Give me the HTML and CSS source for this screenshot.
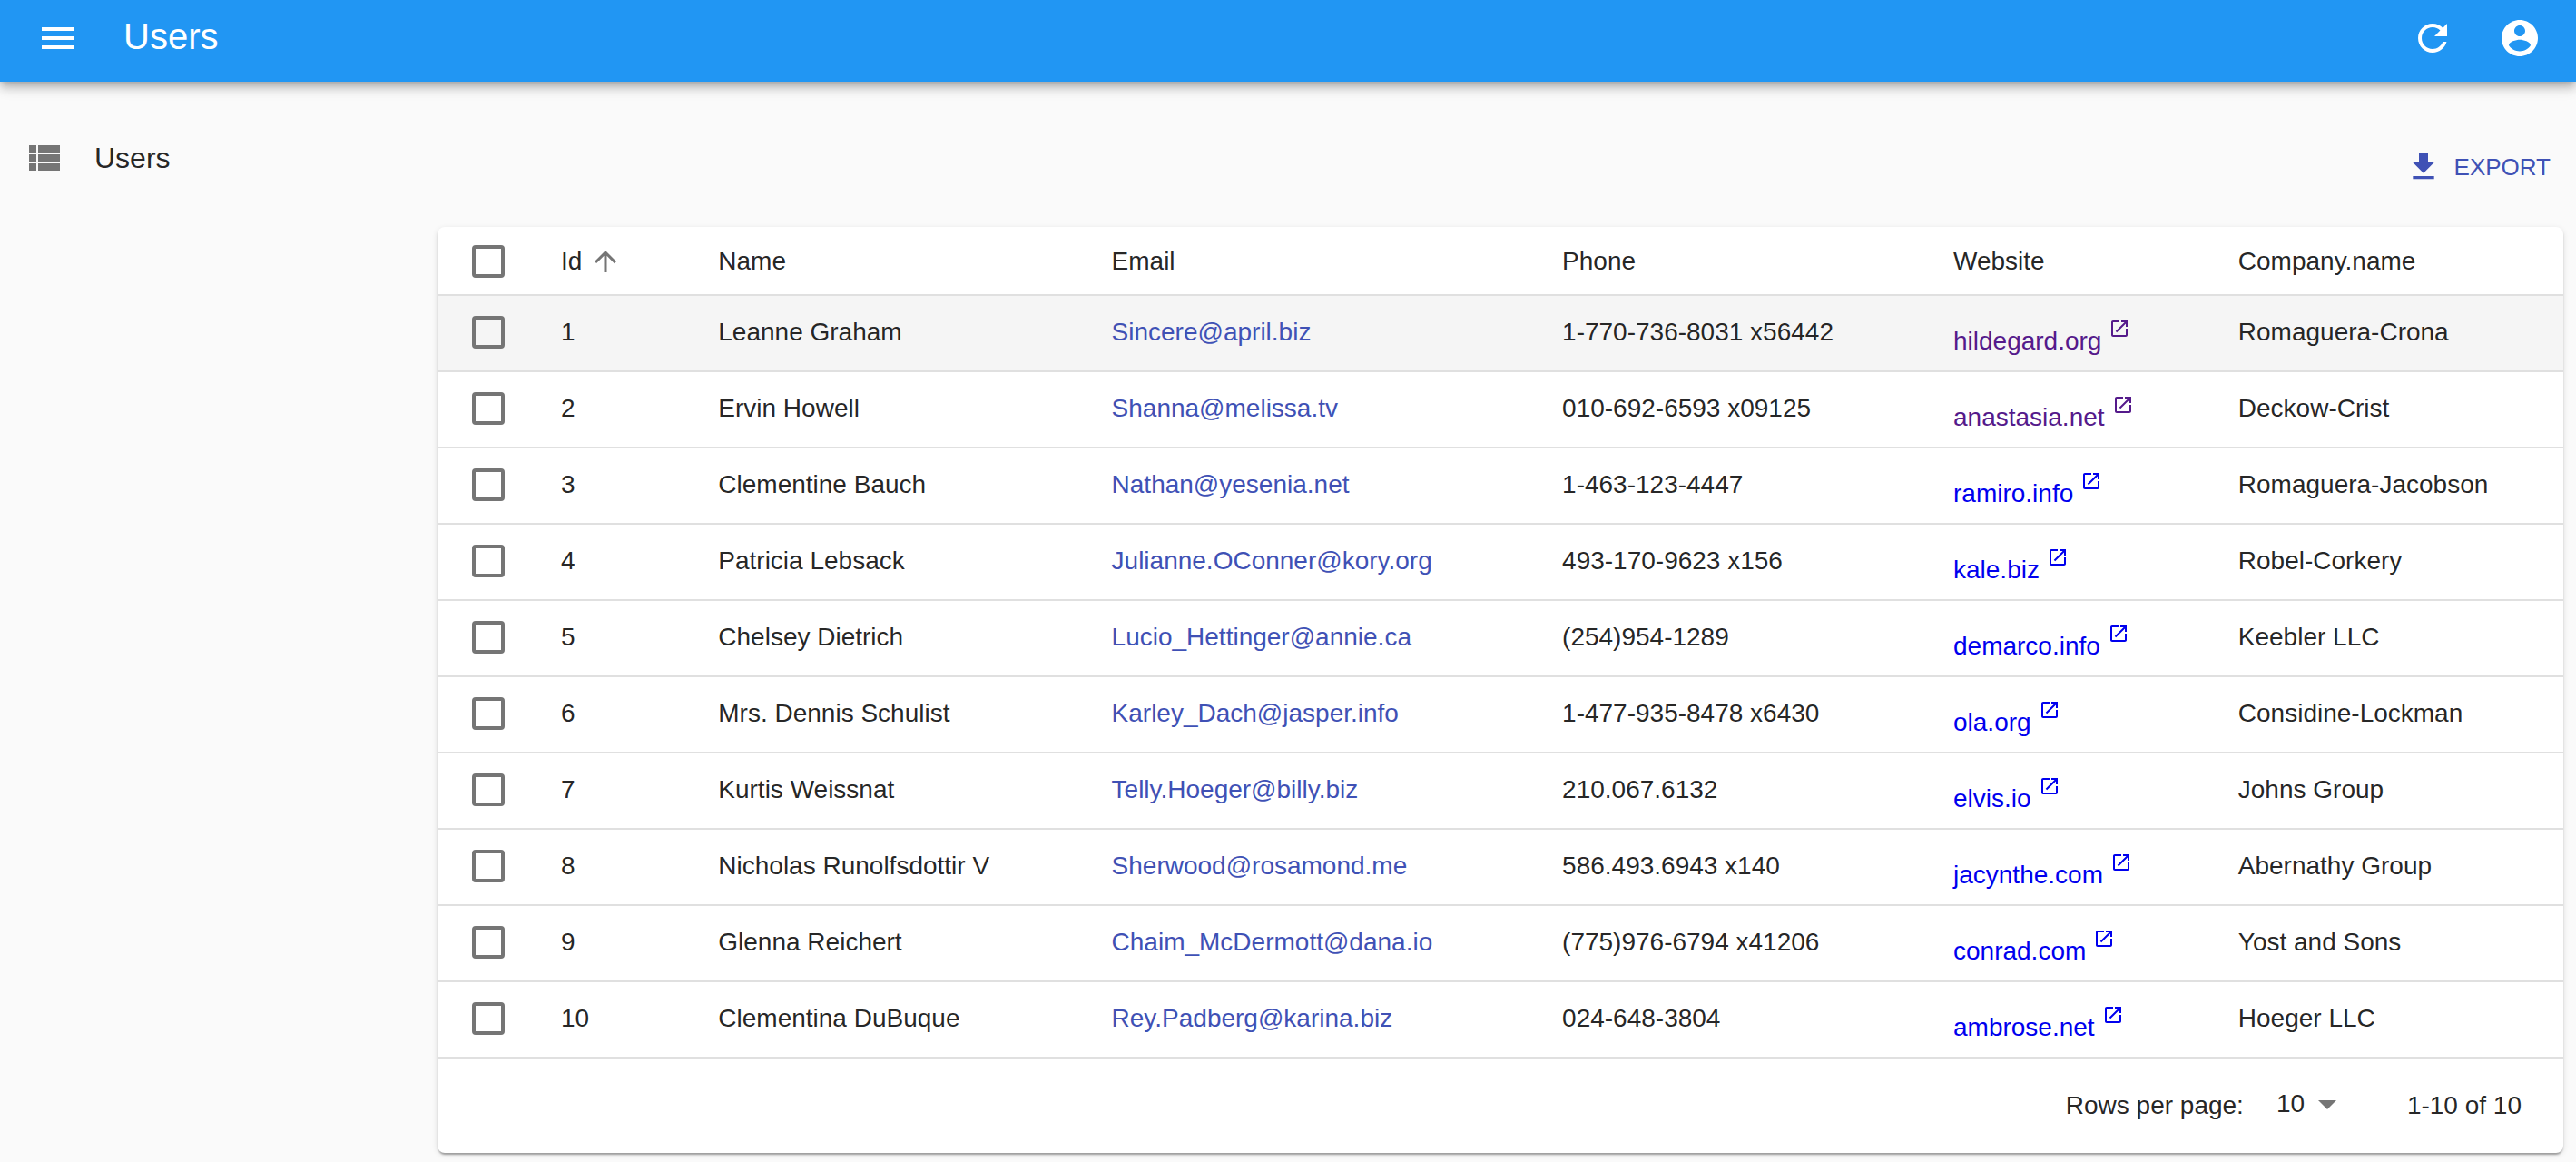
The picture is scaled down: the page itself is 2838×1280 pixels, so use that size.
FILE: index.html
```html
<!DOCTYPE html>
<html lang="en">
<head>
<meta charset="utf-8">
<title>Users</title>
<link rel="stylesheet" href="styles.css">
</head>
<body>
<svg class="sprite" aria-hidden="true">
  <symbol id="open" viewBox="0 0 24 24"><path d="M19 19H5V5h7V3H5c-1.110 0-2 .9-2 2v14c0 1.100.89 2 2 2h14c1.100 0 2-.9 2-2v-7h-2v7zM14 3v2h3.590l-9.830 9.830 1.410 1.410L19 6.410V10h2V3h-7z"/></symbol>
</svg>
<header class="app-bar">
  <button class="icon-button" type="button" aria-label="Open menu"><svg class="icon" viewBox="0 0 24 24"><path d="M3 18h18v-2H3v2zm0-5h18v-2H3v2zm0-7v2h18V6H3z"/></svg></button>
  <h1 class="app-title">Users</h1>
  <button class="icon-button" type="button" aria-label="Refresh"><svg class="icon" viewBox="0 0 24 24"><path d="M17.65 6.35C16.2 4.900 14.210 4 12 4c-4.420 0-7.990 3.580-7.990 8s3.570 8 7.990 8c3.730 0 6.840-2.550 7.730-6h-2.080c-.82 2.330-3.040 4-5.650 4-3.310 0-6-2.690-6-6s2.690-6 6-6c1.660 0 3.140.69 4.220 1.780L13 11h7V4l-2.350 2.350z"/></svg></button>
  <button class="icon-button" type="button" aria-label="Profile"><svg class="icon" viewBox="0 0 24 24"><path d="M12 2C6.480 2 2 6.480 2 12s4.480 10 10 10 10-4.480 10-10S17.520 2 12 2zm0 3c1.660 0 3 1.340 3 3s-1.340 3-3 3-3-1.340-3-3 1.340-3 3-3zm0 14.200c-2.500 0-4.710-1.280-6-3.220.03-1.990 4-3.080 6-3.080 1.990 0 5.970 1.090 6 3.080-1.290 1.940-3.500 3.220-6 3.220z"/></svg></button>
</header>
<div class="layout">
  <nav class="sidebar">
    <a class="menu-item" href="#users"><svg class="icon" viewBox="0 0 24 24"><path d="M4 14h4v-4H4v4zm0 5h4v-4H4v4zM4 9h4V5H4v4zm5 5h12v-4H9v4zm0 5h12v-4H9v4zM9 5v4h12V5H9z"/></svg>Users</a>
  </nav>
  <main class="content">
    <div class="actions">
      <button class="export" type="button"><svg class="export-icon" viewBox="0 0 24 24"><path d="M19 9h-4V3H9v6H5l7 7 7-7zM5 18v2h14v-2H5z"/></svg>EXPORT</button>
    </div>
    <section class="card">
      <table class="users">
        <colgroup><col class="col-check"><col class="col-id"><col class="col-name"><col class="col-email"><col class="col-phone"><col class="col-website"><col></colgroup>
        <thead>
          <tr><th><input class="check" type="checkbox" aria-label="Select all"></th><th><span class="sort">Id <svg class="sort-icon" viewBox="0 0 24 24"><path d="M4 12l1.410 1.410L11 7.830V20h2V7.830l5.580 5.590L20 12l-8-8-8 8z"/></svg></span></th><th>Name</th><th>Email</th><th>Phone</th><th>Website</th><th>Company.name</th></tr>
        </thead>
        <tbody>
          <tr class="active"><td><input class="check" type="checkbox" aria-label="Select user 1"></td><td>1</td><td>Leanne Graham</td><td><a class="email" href="mailto:Sincere@april.biz">Sincere@april.biz</a></td><td>1-770-736-8031 x56442</td><td><a class="site visited" href="http://hildegard.org">hildegard.org<svg class="open-icon"><use href="#open"/></svg></a></td><td>Romaguera-Crona</td></tr>
          <tr><td><input class="check" type="checkbox" aria-label="Select user 2"></td><td>2</td><td>Ervin Howell</td><td><a class="email" href="mailto:Shanna@melissa.tv">Shanna@melissa.tv</a></td><td>010-692-6593 x09125</td><td><a class="site visited" href="http://anastasia.net">anastasia.net<svg class="open-icon"><use href="#open"/></svg></a></td><td>Deckow-Crist</td></tr>
          <tr><td><input class="check" type="checkbox" aria-label="Select user 3"></td><td>3</td><td>Clementine Bauch</td><td><a class="email" href="mailto:Nathan@yesenia.net">Nathan@yesenia.net</a></td><td>1-463-123-4447</td><td><a class="site" href="http://ramiro.info">ramiro.info<svg class="open-icon"><use href="#open"/></svg></a></td><td>Romaguera-Jacobson</td></tr>
          <tr><td><input class="check" type="checkbox" aria-label="Select user 4"></td><td>4</td><td>Patricia Lebsack</td><td><a class="email" href="mailto:Julianne.OConner@kory.org">Julianne.OConner@kory.org</a></td><td>493-170-9623 x156</td><td><a class="site" href="http://kale.biz">kale.biz<svg class="open-icon"><use href="#open"/></svg></a></td><td>Robel-Corkery</td></tr>
          <tr><td><input class="check" type="checkbox" aria-label="Select user 5"></td><td>5</td><td>Chelsey Dietrich</td><td><a class="email" href="mailto:Lucio_Hettinger@annie.ca">Lucio_Hettinger@annie.ca</a></td><td>(254)954-1289</td><td><a class="site" href="http://demarco.info">demarco.info<svg class="open-icon"><use href="#open"/></svg></a></td><td>Keebler LLC</td></tr>
          <tr><td><input class="check" type="checkbox" aria-label="Select user 6"></td><td>6</td><td>Mrs. Dennis Schulist</td><td><a class="email" href="mailto:Karley_Dach@jasper.info">Karley_Dach@jasper.info</a></td><td>1-477-935-8478 x6430</td><td><a class="site" href="http://ola.org">ola.org<svg class="open-icon"><use href="#open"/></svg></a></td><td>Considine-Lockman</td></tr>
          <tr><td><input class="check" type="checkbox" aria-label="Select user 7"></td><td>7</td><td>Kurtis Weissnat</td><td><a class="email" href="mailto:Telly.Hoeger@billy.biz">Telly.Hoeger@billy.biz</a></td><td>210.067.6132</td><td><a class="site" href="http://elvis.io">elvis.io<svg class="open-icon"><use href="#open"/></svg></a></td><td>Johns Group</td></tr>
          <tr><td><input class="check" type="checkbox" aria-label="Select user 8"></td><td>8</td><td>Nicholas Runolfsdottir V</td><td><a class="email" href="mailto:Sherwood@rosamond.me">Sherwood@rosamond.me</a></td><td>586.493.6943 x140</td><td><a class="site" href="http://jacynthe.com">jacynthe.com<svg class="open-icon"><use href="#open"/></svg></a></td><td>Abernathy Group</td></tr>
          <tr><td><input class="check" type="checkbox" aria-label="Select user 9"></td><td>9</td><td>Glenna Reichert</td><td><a class="email" href="mailto:Chaim_McDermott@dana.io">Chaim_McDermott@dana.io</a></td><td>(775)976-6794 x41206</td><td><a class="site" href="http://conrad.com">conrad.com<svg class="open-icon"><use href="#open"/></svg></a></td><td>Yost and Sons</td></tr>
          <tr><td><input class="check" type="checkbox" aria-label="Select user 10"></td><td>10</td><td>Clementina DuBuque</td><td><a class="email" href="mailto:Rey.Padberg@karina.biz">Rey.Padberg@karina.biz</a></td><td>024-648-3804</td><td><a class="site" href="http://ambrose.net">ambrose.net<svg class="open-icon"><use href="#open"/></svg></a></td><td>Hoeger LLC</td></tr>
        </tbody>
      </table>
      <footer class="pagination">
        <label for="per-page">Rows per page:</label>
        <span class="select">
          <select id="per-page"><option>5</option><option selected>10</option><option>25</option></select>
          <svg class="select-icon" viewBox="0 0 24 24" aria-hidden="true"><path d="M7 10l5 5 5-5z"/></svg>
        </span>
        <span>1-10 of 10</span>
      </footer>
    </section>
  </main>
</div>
</body>
</html>
```

FILE: styles.css
```css
* { box-sizing: border-box; }

body {
  margin: 0;
  background: #fafafa;
  color: rgba(0, 0, 0, 0.87);
  font-family: Helvetica, "Liberation Sans", Arial, sans-serif;
  font-size: 28px;
  line-height: 40px;
}

button, select { font: inherit; color: inherit; background: none; border: 0; }
button { cursor: pointer; }
a { color: inherit; text-decoration: none; }
svg { flex: none; fill: currentColor; }

.sprite { display: none; }
.icon { display: block; width: 48px; height: 48px; }

/* Top bar */
.app-bar {
  display: flex;
  align-items: center;
  height: 90px;
  padding: 0 14px 6px 16px;
  background: #2196f3;
  color: #fff;
  box-shadow: 0 4px 8px -2px rgba(0, 0, 0, 0.2), 0 8px 10px rgba(0, 0, 0, 0.14), 0 2px 20px rgba(0, 0, 0, 0.12);
}
.icon-button { padding: 24px; }
.app-title {
  flex: 1;
  margin: 0 24px;
  padding-bottom: 4px;
  font-size: 40px;
  font-weight: 400;
}

/* Body of the page */
.layout { display: flex; padding: 0 14px 10px 0; }
.sidebar { flex: none; width: 482px; padding: 60px 24px 0; }
.menu-item { display: flex; align-items: center; gap: 32px; font-size: 32px; }
.menu-item .icon { color: #757575; }
.content { flex: 1; min-width: 0; }

.actions { display: flex; justify-content: flex-end; padding: 64px 14px 36px 0; }
.export {
  display: flex;
  align-items: center;
  gap: 14px;
  height: 60px;
  padding: 0;
  color: #3f51b5;
  font-size: 26px;
}
.export-icon { width: 40px; height: 40px; }

.card {
  border-radius: 8px;
  background: #fff;
  box-shadow: 0 4px 2px -2px rgba(0, 0, 0, 0.2), 0 2px 2px rgba(0, 0, 0, 0.14), 0 2px 6px rgba(0, 0, 0, 0.12);
}

/* Data table */
.users { width: 100%; table-layout: fixed; border-collapse: separate; border-spacing: 0; }
.col-check { width: 112px; }
.col-id { width: 7.4%; }
.col-name { width: 18.5%; }
.col-phone { width: 18.4%; }
.col-email { width: 21.2%; }
.col-website { width: 13.4%; }
.users th, .users td {
  height: 84px;
  padding: 0 24px 2px;
  border-bottom: 2px solid #e0e0e0;
  font-weight: 400;
  text-align: left;
  white-space: nowrap;
}
.users th { height: 76px; padding: 2px 24px 0; }
.users th:first-child, .users td:first-child { padding-left: 38px; }
.active { background: #f5f5f5; }

.check {
  display: block;
  width: 36px;
  height: 36px;
  margin: 0;
  appearance: none;
  border: 4px solid #757575;
  border-radius: 4px;
}
.check:checked { background: #757575; }

.sort { display: flex; align-items: center; gap: 8px; }
.sort-icon { width: 36px; height: 36px; color: #757575; }

.email { color: #3f51b5; }
.site {
  display: flex;
  align-items: flex-end;
  gap: 8px;
  height: 52px;
  color: #0000ee;
  line-height: 32px;
}
.site.visited { color: #551a8b; }
.open-icon { width: 24px; height: 24px; margin-bottom: 18px; }

/* Pagination */
.pagination {
  display: flex;
  align-items: center;
  justify-content: flex-end;
  height: 104px;
  padding-right: 46px;
}
.select { display: grid; align-items: center; margin: 0 64px 0 20px; padding-bottom: 4px; }
.select select {
  grid-area: 1 / 1;
  width: 96px;
  padding: 0 48px 0 16px;
  appearance: none;
}
.select-icon {
  grid-area: 1 / 1;
  justify-self: end;
  width: 48px;
  height: 48px;
  color: #757575;
  pointer-events: none;
}
```
